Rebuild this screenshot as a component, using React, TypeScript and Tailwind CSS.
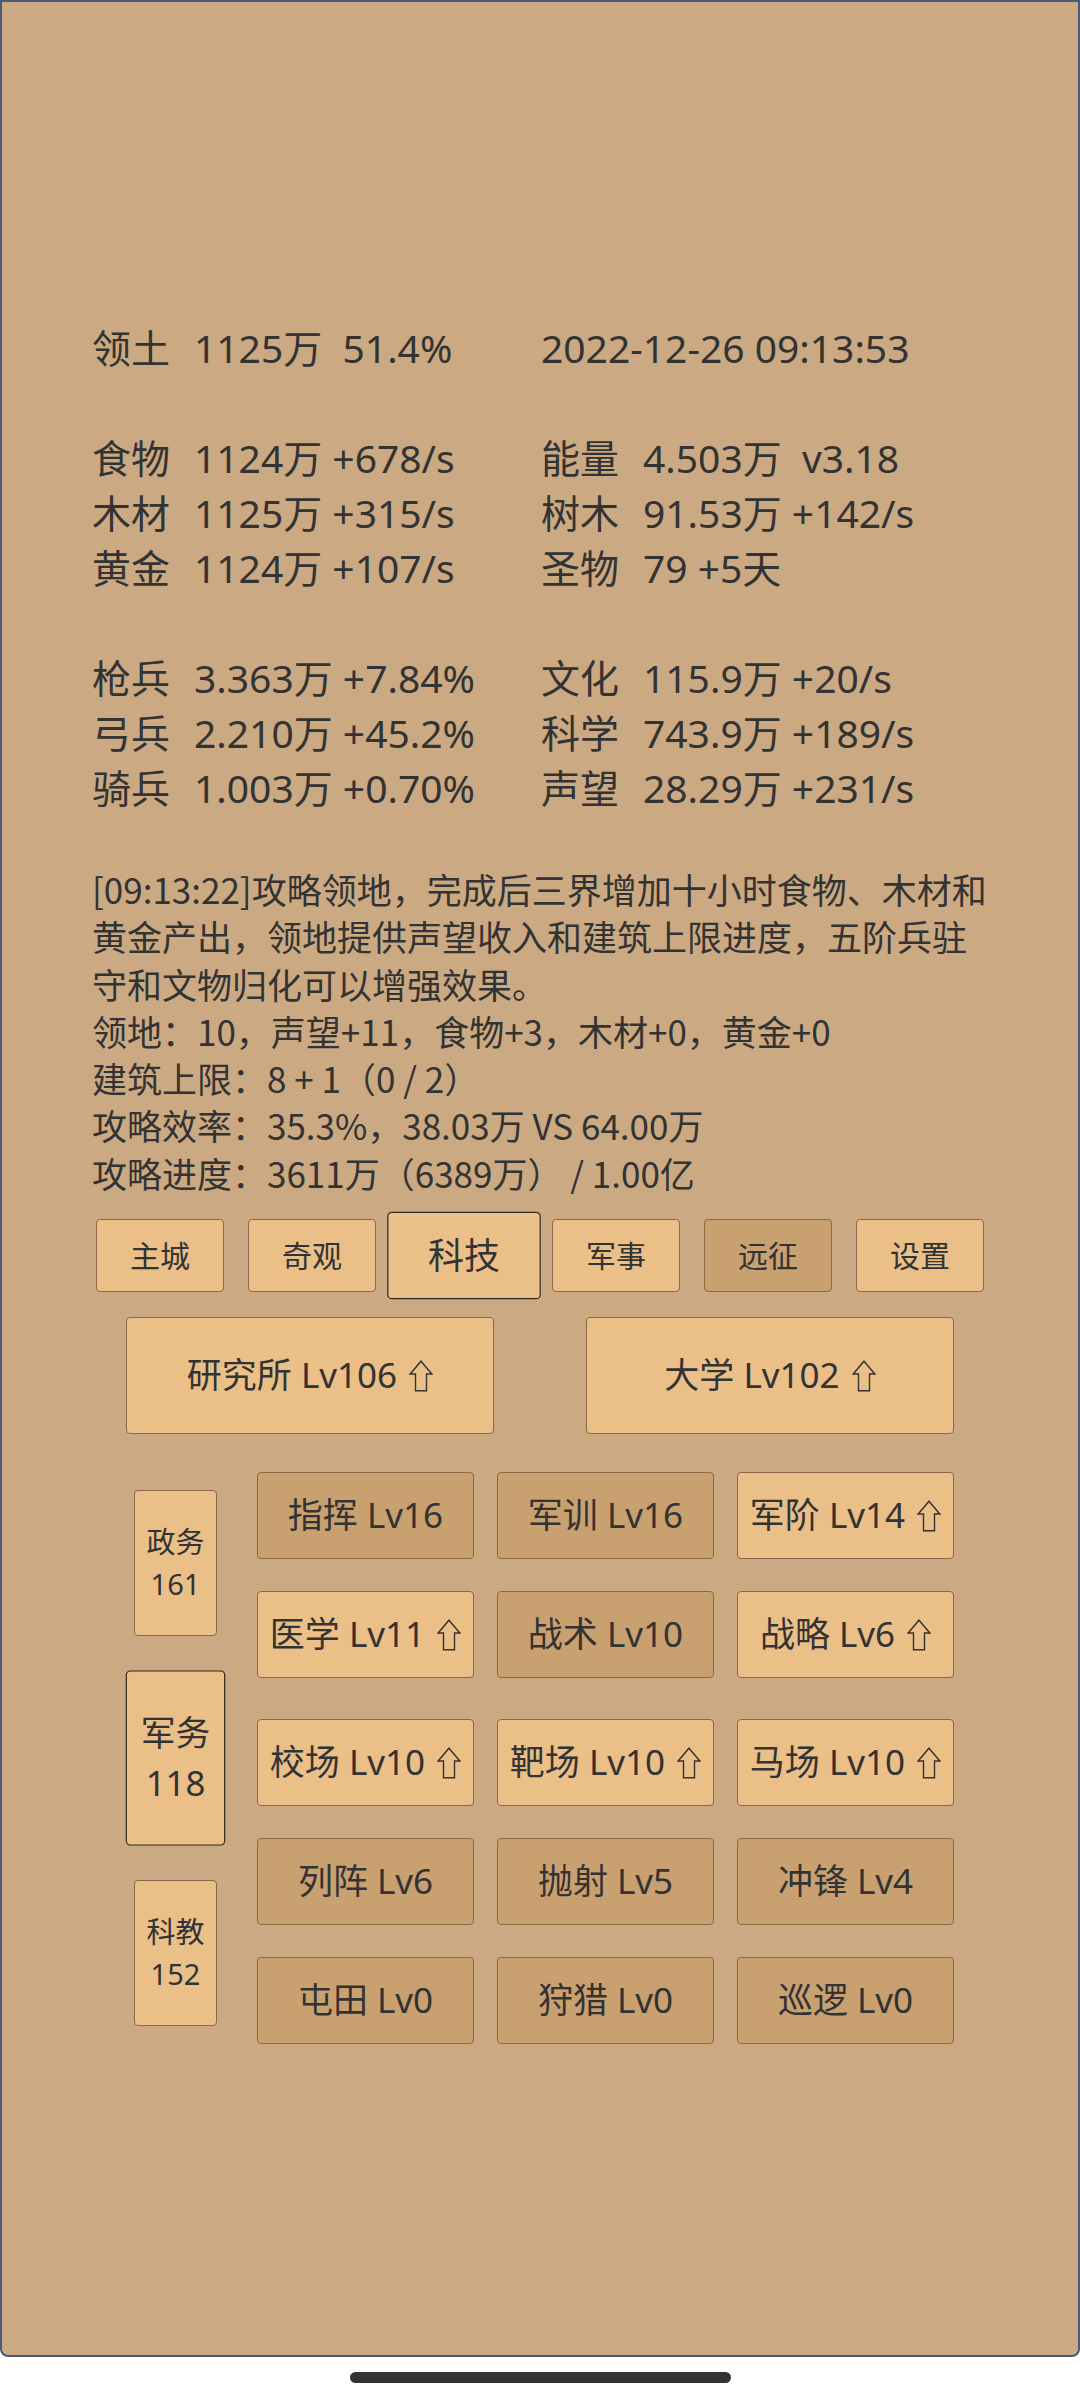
import clsx from "clsx";

const FONT = "font-[family-name:'Noto_Sans','Noto_Sans_CJK_SC',sans-serif]";
const CJK = "font-[family-name:'Noto_Sans_CJK_SC',sans-serif]";

type Cell = [string | null, string];

// stat lines, null = blank line
const STATS: ([Cell, Cell] | null)[] = [
  [["领土", "1125万  51.4%"], [null, "2022-12-26 09:13:53"]],
  null,
  [["食物", "1124万 +678/s"], ["能量", "4.503万  v3.18"]],
  [["木材", "1125万 +315/s"], ["树木", "91.53万 +142/s"]],
  [["黄金", "1124万 +107/s"], ["圣物", "79 +5天"]],
  null,
  [["枪兵", "3.363万 +7.84%"], ["文化", "115.9万 +20/s"]],
  [["弓兵", "2.210万 +45.2%"], ["科学", "743.9万 +189/s"]],
  [["骑兵", "1.003万 +0.70%"], ["声望", "28.29万 +231/s"]],
];

const LOG = [
  "[09:13:22]攻略领地，完成后三界增加十小时食物、木材和",
  "黄金产出，领地提供声望收入和建筑上限进度，五阶兵驻",
  "守和文物归化可以增强效果。",
  "领地：10，声望+11，食物+3，木材+0，黄金+0",
  "建筑上限：8 + 1（0 / 2）",
  "攻略效率：35.3%，38.03万 VS 64.00万",
  "攻略进度：3611万（6389万） / 1.00亿",
];

const TABS = [
  { name: "主城" },
  { name: "奇观" },
  { name: "科技", active: true },
  { name: "军事" },
  { name: "远征", dark: true },
  { name: "设置" },
];

const SIDE = [
  { name: "政务", n: "161" },
  { name: "军务", n: "118", active: true },
  { name: "科教", n: "152" },
];

type Tech = { name: string; up?: boolean };

const TECH: Tech[][] = [
  [{ name: "指挥 Lv16" }, { name: "军训 Lv16" }, { name: "军阶 Lv14", up: true }],
  [{ name: "医学 Lv11", up: true }, { name: "战术 Lv10" }, { name: "战略 Lv6", up: true }],
  [{ name: "校场 Lv10", up: true }, { name: "靶场 Lv10", up: true }, { name: "马场 Lv10", up: true }],
  [{ name: "列阵 Lv6" }, { name: "抛射 Lv5" }, { name: "冲锋 Lv4" }],
  [{ name: "屯田 Lv0" }, { name: "狩猎 Lv0" }, { name: "巡逻 Lv0" }],
];

function UpArrow() {
  return (
    <svg width="24" height="32" viewBox="0 0 24 32" className="ml-[12px] shrink-0">
      <path
        d="M12 1.2 L22.8 14 L17.5 14 L17.5 30.8 L6.5 30.8 L6.5 14 L1.2 14 Z"
        fill="none"
        stroke="#333"
        strokeWidth="1.4"
      />
    </svg>
  );
}

function StatCell({ cell }: { cell: Cell }) {
  const [label, value] = cell;
  return (
    <div className="flex whitespace-pre">
      {label && <span className="w-[102px] shrink-0">{label}</span>}
      <span>{value}</span>
    </div>
  );
}

export default function App() {
  return (
    <div className={clsx("w-[1080px] h-[2400px] bg-white text-[#333]", FONT)}>
      <div className="h-[2357px] bg-[#cba982] border-2 border-[#4b5a73] rounded-b-[8px] flex flex-col">
        {/* stats */}
        <div className="pt-[318px] pl-[90px] text-[39px] leading-[55px]">
          {STATS.map((row, i) =>
            row ? (
              <div key={i} className="flex">
                <div className="w-[449px]">
                  <StatCell cell={row[0]} />
                </div>
                <StatCell cell={row[1]} />
              </div>
            ) : (
              <div key={i} className="h-[55px]" />
            ),
          )}
        </div>

        {/* log */}
        <div className={clsx("mt-[50px] pl-[90px] text-[35px] leading-[47.3px] whitespace-nowrap", CJK)}>
          {LOG.map((l) => (
            <div key={l}>{l}</div>
          ))}
        </div>

        {/* tabs */}
        <div className="mt-[23px] flex justify-center gap-[24px]">
          {TABS.map((t) => (
            <div
              key={t.name}
              className={clsx(
                "w-[128px] h-[73px] flex items-center justify-center rounded-[4px] border text-[30px]",
                t.active ? "scale-[1.2] border-[#2e2822]" : "border-[#8a6a46]",
                t.dark ? "bg-[#c9a06f]" : "bg-[#eabf88]",
              )}
            >
              {t.name}
            </div>
          ))}
        </div>

        {/* buildings */}
        <div className="mt-[25px] flex justify-center gap-[92px]">
          {["研究所 Lv106", "大学 Lv102"].map((b) => (
            <div
              key={b}
              className="w-[368px] h-[117px] flex items-center justify-center rounded-[4px] border border-[#8a6a46] bg-[#eabf88] text-[35px]"
            >
              <span className="whitespace-pre">{b}</span>
              <UpArrow />
            </div>
          ))}
        </div>

        {/* tech */}
        <div className="mt-[38px] flex justify-center items-center gap-[32px]">
          <div className="w-[99px] flex flex-col items-center gap-[49px]">
            {SIDE.map((s) => (
              <div
                key={s.name}
                className={clsx(
                  "w-[83px] h-[146px] flex flex-col items-center justify-center rounded-[4px] border bg-[#eabf88] text-[29px] leading-[42px]",
                  s.active ? "scale-[1.2] border-[#2e2822]" : "border-[#8a6a46]",
                )}
              >
                <span>{s.name}</span>
                <span>{s.n}</span>
              </div>
            ))}
          </div>

          <div className="w-[697px] flex flex-col gap-[32px]">
            {TECH.map((row, i) => (
              <div key={i} className={clsx("grid grid-cols-3 gap-[23px]", i === 2 && "mt-[9px]")}>
                {row.map((t) => (
                  <div
                    key={t.name}
                    className={clsx(
                      "h-[87px] flex items-center justify-center rounded-[4px] border border-[#8a6a46] text-[35px]",
                      t.up ? "bg-[#eabf88]" : "bg-[#c9a06f]",
                    )}
                  >
                    <span className="whitespace-pre">{t.name}</span>
                    {t.up && <UpArrow />}
                  </div>
                ))}
              </div>
            ))}
          </div>
        </div>
      </div>

      <div className="flex justify-center pt-[15px]">
        <div className="w-[381px] h-[11px] rounded-full bg-[#333]" />
      </div>
    </div>
  );
}
